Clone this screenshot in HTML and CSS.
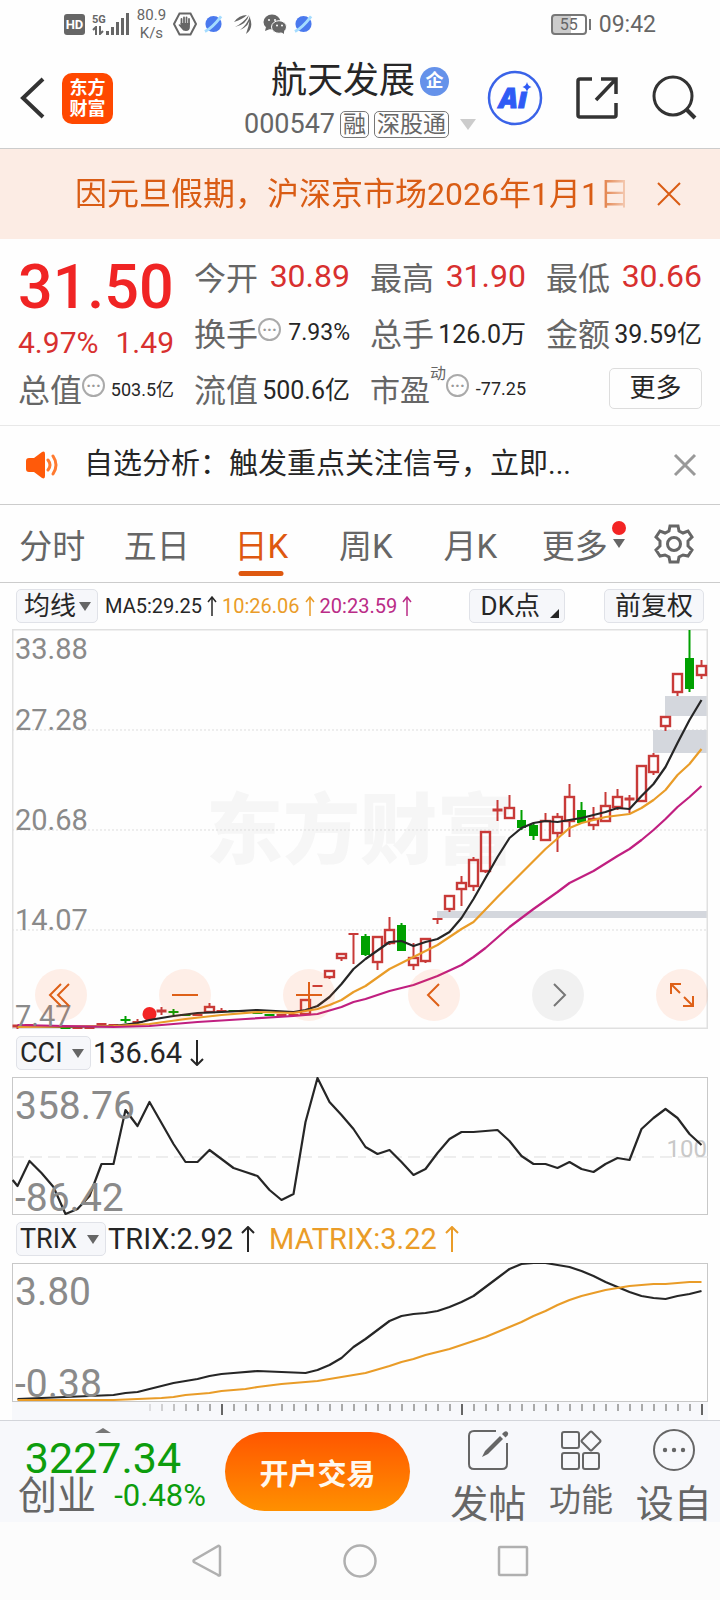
FILE: index.html
```html
<!DOCTYPE html>
<html lang="zh-CN">
<head>
  <meta charset="UTF-8" />
  <meta name="viewport" content="width=device-width, initial-scale=1.0"/>
  <title>航天发展 000547</title>
  <link rel="stylesheet" href="styles.css">
</head>
<body>

  <div class="status">
    <span class="hd">HD</span>
    <div class="signal">
      <div class="net">
        <span>5G</span>
        <svg width="12" height="9" viewBox="0 0 12 9" fill="none" stroke="#666" stroke-width="2"><path d="M4 9V1L1 4M8 0v8l3-3"/></svg>
      </div>
      <svg width="24" height="22" viewBox="0 0 24 22" fill="#666"><path d="M0 18h3v4H0zM5 14h3v8H5zM10 9h3v13h-3zM15 5h3v17h-3zM20 0h3v22h-3z"/></svg>
    </div>
    <div class="speed"><span>80.9</span><span>K/s</span></div>
    <svg width="24" height="24" viewBox="0 0 24 24"><path d="M6.500 1.500h11L23 12l-5.500 10.500h-11L1 12z" fill="none" stroke="#666" stroke-width="2"/><path d="M8.500 12V7M11 11V5.500M13.500 11V5.500M16 12V7" stroke="#666" stroke-width="1.800" stroke-linecap="round"/><path d="M7.600 11h9.300v4q0 4-4 4-3 0-4.400-2.500L5.500 13q.6-1.400 2.100 0z" fill="#666"/></svg>
    <svg width="19" height="20" viewBox="0 0 20 20"><circle cx="10" cy="10" r="8.500" fill="#4a79ee"/><path d="M1 18Q9 14 18 2" stroke="#a5dcff" stroke-width="3" fill="none"/></svg>
    <svg class="fan" width="18" height="20" viewBox="0 0 18 20" fill="#666"><path d="M0 8Q5 1 13 1Q9 5 0 8zM1 13Q9 9 15 1Q13 10 1 13zM6 16Q13 11 16 2Q17 11 6 16zM12 20Q15 12 16 4Q20 14 12 20z"/></svg>
    <svg width="24" height="20" viewBox="0 0 24 20"><ellipse cx="9" cy="8" rx="8.500" ry="7.500" fill="#666"/><path d="M3 13l-1 4 5-2z" fill="#666"/><ellipse cx="16" cy="13" rx="7.500" ry="6.300" fill="#666" stroke="#fff" stroke-width="1"/><path d="M18 18l3 2v-4z" fill="#666"/><g fill="#fff"><circle cx="6" cy="6" r="1"/><circle cx="12" cy="6" r="1"/><circle cx="14" cy="11.500" r="1"/><circle cx="19" cy="11.500" r="1"/></g></svg>
    <svg width="19" height="20" viewBox="0 0 20 20"><circle cx="10" cy="10" r="8.500" fill="#4a79ee"/><path d="M1 18Q9 14 18 2" stroke="#a5dcff" stroke-width="3" fill="none"/></svg>
    <div class="power">
      <span class="battery">55</span>
      <span class="clock">09:42</span>
    </div>
  </div>

  <header class="header">
    <div class="header-left">
      <button class="icon" aria-label="返回"><svg width="26" height="42" viewBox="0 0 26 42" fill="none" stroke="#333" stroke-width="4"><path d="M23 2L3 21l20 19"/></svg></button>
      <a class="logo" href="#"><span>东方</span><span>财富</span></a>
    </div>
    <div class="stock">
      <h1>航天发展<span class="badge">企</span></h1>
      <div class="code">
        <span>000547</span>
        <span class="tag">融</span>
        <span class="tag">深股通</span>
        <span class="tri tri-light"></span>
      </div>
    </div>
    <div class="header-right">
      <button class="icon" aria-label="Ai">
        <svg width="56" height="56" viewBox="0 0 56 56"><circle cx="28" cy="28" r="26" fill="none" stroke="#3a63e8" stroke-width="2.500"/><text class="ai" x="12" y="38">Aı</text><path d="M40 12q.8 4 4.500 5-3.700 1-4.500 5-.8-4-4.500-5 3.700-1 4.500-5z" fill="#2f5bf5"/></svg>
      </button>
      <button class="icon" aria-label="分享">
        <svg width="44" height="44" viewBox="0 0 44 44" fill="none" stroke="#333" stroke-width="3.500"><path d="M17 3H5q-2 0-2 2v34q0 2 2 2h34q2 0 2-2V27M26 3h15v15M41 3L21 24"/></svg>
      </button>
      <button class="icon" aria-label="搜索">
        <svg width="46" height="46" viewBox="0 0 46 46" fill="none" stroke="#333" stroke-width="3"><circle cx="22" cy="21" r="19"/><path d="M35 34l9 9" stroke-width="4"/></svg>
      </button>
    </div>
  </header>

  <div class="notice">
    <p>因元旦假期，沪深京市场2026年1月1日至1月3日休市</p>
    <button class="icon" aria-label="关闭公告"><svg width="24" height="24" viewBox="0 0 24 24" stroke="#d95c14" stroke-width="2"><path d="M1 1l22 22M23 1L1 23"/></svg></button>
  </div>

  <section class="quote">
    <div class="price">
      <strong>31.50</strong>
      <div class="change"><span>4.97%</span><span>1.49</span></div>
    </div>
    <div class="cell"><span class="label">今开</span><span class="up">30.89</span></div>
    <div class="cell"><span class="label">最高</span><span class="up">31.90</span></div>
    <div class="cell"><span class="label">最低</span><span class="up">30.66</span></div>
    <div class="cell"><span class="label">换手<i class="dots">···</i></span><span class="val fit">7.93%</span></div>
    <div class="cell"><span class="label">总手</span><span class="val">126.0万</span></div>
    <div class="cell"><span class="label">金额</span><span class="val">39.59亿</span></div>
    <div class="cell"><span class="label">总值<i class="dots">···</i></span><span class="val small">503.5亿</span></div>
    <div class="cell"><span class="label">流值</span><span class="val">500.6亿</span></div>
    <div class="cell"><span class="label tight">市盈<sup>动</sup><i class="dots">···</i></span><span class="val small">-77.25</span></div>
    <div class="cell end"><button class="more">更多</button></div>
  </section>

  <div class="alert">
    <svg width="34" height="28" viewBox="0 0 34 28"><path d="M1 10q0-3 3-3h5l8-6q3-1.500 3 2v22q0 3.500-3 2l-8-6H4q-3 0-3-3z" fill="#ff5a0a"/><path d="M23 9q4 5 0 10M28 5q6 9 0 18" fill="none" stroke="#ff7a30" stroke-width="3" stroke-linecap="round"/></svg>
    <p>自选分析：触发重点关注信号，立即...</p>
    <button class="icon" aria-label="关闭提醒"><svg width="24" height="24" viewBox="0 0 24 24" stroke="#999" stroke-width="3"><path d="M2 2l20 20M22 2L2 22"/></svg></button>
  </div>

  <nav class="tabs">
    <button>分时</button>
    <button>五日</button>
    <button class="active">日K</button>
    <button>周K</button>
    <button>月K</button>
    <button class="has-dot">更多</button>
    <button class="gear" aria-label="设置">
      <svg width="40" height="40" viewBox="0 0 40 40" fill="none" stroke="#666" stroke-width="3"><path d="M16 2h8l1 5 4 2 5-2 4 6-4 4v5l4 4-4 6-5-1-4 2-1 5h-8l-1-5-4-2-5 1-4-6 4-4v-5l-4-4 4-6 5 2 4-2z"/><circle cx="20" cy="20" r="6.500"/></svg>
    </button>
  </nav>

  <div class="toolbar">
    <span class="picker"><select aria-label="主图指标"><option>均线</option></select></span>
    <div class="ma">
      <span class="ink">MA5:29.25<svg class="arrow" viewBox="0 0 10 20"><path d="M5 20V1M1 6l4-5 4 5"/></svg></span>
      <span class="gold">10:26.06<svg class="arrow" viewBox="0 0 10 20"><path d="M5 20V1M1 6l4-5 4 5"/></svg></span>
      <span class="pink">20:23.59<svg class="arrow" viewBox="0 0 10 20"><path d="M5 20V1M1 6l4-5 4 5"/></svg></span>
    </div>
    <button class="chip corner">DK点</button>
    <button class="chip">前复权</button>
  </div>

  <div class="plot">
    <svg id="kline" viewBox="0 0 696 400"></svg>
    <div class="controls">
      <button aria-label="最早"><svg width="26" height="26" viewBox="0 0 26 26"><path d="M13 2L2 13l11 11M21 2L10 13l11 11"/></svg></button>
      <button aria-label="缩小"><svg width="26" height="26" viewBox="0 0 26 26"><path d="M0 13h26"/></svg></button>
      <button aria-label="放大"><svg width="26" height="26" viewBox="0 0 26 26"><path d="M0 13h26M13 0v26"/></svg></button>
      <button aria-label="左移"><svg width="26" height="26" viewBox="0 0 26 26"><path d="M18 2L7 13l11 11"/></svg></button>
      <button class="off" aria-label="右移"><svg width="26" height="26" viewBox="0 0 26 26"><path d="M9 2l11 11L9 24"/></svg></button>
      <button aria-label="全屏"><svg width="26" height="26" viewBox="0 0 26 26"><path d="M2 12V2h10M2 2l9 9M24 14v10H14M24 24l-9-9"/></svg></button>
    </div>
  </div>

  <div class="indicator">
    <span class="picker wide"><select aria-label="副图指标一"><option>CCI</option></select></span>
    <span class="ink">136.64<svg class="arrow" viewBox="0 0 14 26"><path d="M7 0v25M1 19l6 6 6-6"/></svg></span>
  </div>
  <div class="plot"><svg id="cci" viewBox="0 0 696 138"></svg></div>

  <div class="indicator">
    <span class="picker wide"><select aria-label="副图指标二"><option>TRIX</option></select></span>
    <span class="ink">TRIX:2.92<svg class="arrow" viewBox="0 0 14 26"><path d="M7 26V1M1 7l6-6 6 6"/></svg></span>
    <span class="gold">MATRIX:3.22<svg class="arrow" viewBox="0 0 14 26"><path d="M7 26V1M1 7l6-6 6 6"/></svg></span>
  </div>
  <div class="plot"><svg id="trix" viewBox="0 0 696 139"></svg></div>
  <div class="plot ruler"><svg id="ruler" viewBox="0 0 696 18"></svg></div>

  <footer class="bottom">
    <div class="index">
      <span class="tri-up"></span>
      <strong>3227.34</strong>
      <div><span class="name">创业</span><span>-0.48%</span></div>
    </div>
    <button class="trade">开户交易</button>
    <div class="actions">
      <a href="#">
        <svg width="42" height="42" viewBox="0 0 42 42" fill="none" stroke="#666" stroke-width="2"><path d="M29 2H7Q2 2 2 7v28q0 5 5 5h28q5 0 5-5V14"/><path d="M15 28l3-6L33 7l3 3-15 15z" fill="#666" stroke="none"/><path d="M35 5l2-2q2-1.500 3.500 0t0 3.500l-2 2z" fill="#666" stroke="none"/></svg>
        <span>发帖</span>
      </a>
      <a href="#">
        <svg width="42" height="42" viewBox="0 0 42 42" fill="none" stroke="#666" stroke-width="2"><rect x="2" y="3" width="17" height="16" rx="2"/><rect x="2" y="24" width="17" height="16" rx="2"/><rect x="23" y="24" width="16" height="16" rx="2"/><path d="M30 3q1-1 2 0l8 8q1 1 0 2l-8 8q-1 1-2 0l-8-8q-1-1 0-2z"/></svg>
        <span class="mid">功能</span>
      </a>
      <a href="#">
        <svg width="42" height="42" viewBox="0 0 42 42"><circle cx="21" cy="21" r="20" fill="none" stroke="#666" stroke-width="2"/><g fill="#666"><circle cx="12" cy="21" r="2.200"/><circle cx="21" cy="21" r="2.200"/><circle cx="30" cy="21" r="2.200"/></g></svg>
        <span>设自</span>
      </a>
    </div>
  </footer>

  <div class="system">
    <button class="icon" aria-label="后退"><svg width="34" height="34" viewBox="0 0 34 34"><path d="M30 3v28q-1 1-2 0L4 18q-1-1 0-2L28 2q1-1 2 1z"/></svg></button>
    <button class="icon" aria-label="主页"><svg width="34" height="34" viewBox="0 0 34 34"><circle cx="17" cy="17" r="15.500"/></svg></button>
    <button class="icon" aria-label="最近任务"><svg width="34" height="34" viewBox="0 0 34 34"><rect x="3" y="3" width="28" height="28" rx="1"/></svg></button>
  </div>

  <script src="script.js"></script>
</body>
</html>
```

FILE: styles.css
```css
* {
  box-sizing: border-box;
  margin: 0;
  padding: 0;
}

body {
  font-family: Roboto, "Noto Sans CJK SC", sans-serif;
  background: #fefefe;
  color: #262626;
}

button, select {
  font-family: inherit;
  color: inherit;
  background: none;
  border: none;
  cursor: pointer;
}

a {
  color: inherit;
  text-decoration: none;
}

svg { display: block; }

.icon {
  display: flex;
  flex-shrink: 0;
}

/* status bar */
.status {
  display: flex;
  align-items: center;
  gap: 7px;
  height: 48px;
  padding: 0 64px;
  color: #666;
}

.hd {
  width: 21px;
  height: 21px;
  border-radius: 3px;
  background: #666;
  color: #fff;
  font-size: 13px;
  font-weight: 700;
  line-height: 21px;
  text-align: center;
}

.signal {
  display: flex;
  align-items: flex-end;
}

.net {
  font-size: 11px;
  font-weight: 700;
  line-height: 13px;
}

.speed {
  display: flex;
  flex-direction: column;
  align-items: center;
  font-size: 15px;
  line-height: 18px;
}

.fan { margin: 0 4px; }

.power {
  display: flex;
  align-items: center;
  gap: 12px;
  margin-left: auto;
}

.battery {
  position: relative;
  width: 36px;
  height: 21px;
  border: 2px solid #777;
  border-radius: 4px;
  background: linear-gradient(to right, #ccc 55%, #fff 55%);
  font-size: 16px;
  line-height: 17px;
  text-align: center;
}

.battery::after {
  content: "";
  position: absolute;
  top: 3px;
  right: -6px;
  width: 2px;
  height: 11px;
  background: #777;
}

.clock { font-size: 23px; }

/* header */
.header {
  display: grid;
  grid-template-columns: 1fr auto 1fr;
  align-items: center;
  height: 101px;
  border-bottom: 1px solid #ccc;
}

.header-left {
  display: flex;
  align-items: center;
  gap: 16px;
  padding-left: 20px;
}

.logo {
  display: flex;
  flex-direction: column;
  justify-content: center;
  align-items: center;
  width: 51px;
  height: 51px;
  border-radius: 10px;
  background: #ff4800;
  color: #fff;
  font-size: 18px;
  font-weight: 700;
  line-height: 21px;
}

.stock {
  display: flex;
  flex-direction: column;
  align-items: center;
  padding-top: 4px;
}

.stock h1 {
  display: flex;
  align-items: center;
  gap: 5px;
  font-size: 36px;
  font-weight: 400;
  line-height: 48px;
}

.badge {
  width: 29px;
  height: 29px;
  border-radius: 50%;
  background: #6592ea;
  color: #fff;
  font-size: 18px;
  font-weight: 700;
  line-height: 28px;
  text-align: center;
}

.code {
  display: flex;
  align-items: center;
  gap: 5px;
  color: #666;
  font-size: 27px;
  line-height: 38px;
}

.tag {
  padding: 0 2px;
  border: 1px solid #777;
  border-radius: 5px;
  font-size: 23px;
  line-height: 25px;
}

.tri {
  border: 6px solid transparent;
  border-top: 10px solid #666;
  border-bottom: 0;
}

.tri-light {
  margin-left: 6px;
  border-width: 11px 8px 0;
  border-top-color: #ccc;
}

.header-right {
  display: flex;
  align-items: center;
  justify-content: flex-end;
  gap: 32px;
  padding-right: 23px;
}

.ai {
  font: italic 800 28px "Open Sans", sans-serif;
  fill: #2f5bf5;
  stroke: #2f5bf5;
}

/* holiday notice */
.notice {
  display: flex;
  align-items: center;
  height: 90px;
  padding: 0 39px 0 75px;
  background: #fcece4;
  color: #d95c14;
}

.notice p {
  flex: 1;
  margin-right: 32px;
  overflow: hidden;
  white-space: nowrap;
  font-size: 32px;
  line-height: 48px;
  -webkit-mask-image: linear-gradient(to right, #000 94%, transparent 102%);
  mask-image: linear-gradient(to right, #000 94%, transparent 102%);
}

/* quote */
.quote {
  display: grid;
  grid-template-columns: repeat(4, 1fr);
  grid-auto-rows: 56px;
  column-gap: 20px;
  padding: 9px 18px;
  border-bottom: 1px solid #e8e8e8;
}

.price {
  grid-row: span 2;
  padding-top: 3px;
  color: #f02424;
}

.price strong {
  display: block;
  font-size: 61px;
  font-weight: 500;
  line-height: 72px;
}

.change {
  display: flex;
  justify-content: space-between;
  color: #d8302f;
  font-size: 30px;
  line-height: 40px;
}

.cell {
  display: flex;
  align-items: center;
  justify-content: space-between;
  white-space: nowrap;
}

.label {
  display: flex;
  align-items: center;
  color: #666;
  font-size: 32px;
}

.tight { font-size: 30px; }

.label sup {
  align-self: flex-start;
  font-size: 16px;
  line-height: 16px;
}

.dots {
  width: 23px;
  height: 23px;
  margin-bottom: 5px;
  border: 2px solid #aaa;
  border-radius: 50%;
  color: #999;
  font: 700 16px/19px Roboto, sans-serif;
  text-align: center;
}

.up {
  color: #d8302f;
  font-size: 32px;
}

.val { font-size: 25px; }

.fit { font-size: 23px; }

.small { font-size: 18px; }

.end { justify-content: flex-end; }

.more {
  width: 93px;
  height: 41px;
  border: 1px solid #ddd;
  border-radius: 5px;
  font-size: 26px;
  line-height: 36px;
}

/* signal alert */
.alert {
  display: flex;
  align-items: center;
  gap: 25px;
  height: 79px;
  padding: 0 23px 0 25px;
  border-bottom: 1px solid #ccc;
}

.alert p {
  flex: 1;
  font-size: 29px;
  line-height: 44px;
  padding-bottom: 2px;
  white-space: nowrap;
}

/* period tabs */
.tabs {
  display: flex;
  height: 78px;
  border-bottom: 1px solid #ccc;
  color: #666;
}

.tabs button {
  position: relative;
  flex: 9;
  font-size: 33px;
}

.tabs .active { color: #de5810; }

.tabs .active::after {
  content: "";
  position: absolute;
  left: 50%;
  bottom: 6px;
  width: 45px;
  height: 5px;
  border-radius: 3px;
  background: #de5810;
  transform: translateX(-50%);
}

.tabs .has-dot::before {
  content: "";
  position: absolute;
  top: 16px;
  right: 1px;
  width: 14px;
  height: 14px;
  border-radius: 50%;
  background: #f32424;
}

.tabs .has-dot::after {
  content: "";
  position: absolute;
  top: 34px;
  right: 2px;
  border: 6px solid transparent;
  border-top: 9px solid #666;
  border-bottom: 0;
}

.tabs .gear {
  display: flex;
  flex: 8;
  align-items: center;
  justify-content: center;
}

/* chart toolbars */
.toolbar, .indicator {
  display: flex;
  align-items: center;
  padding: 0 16px;
  white-space: nowrap;
}

.toolbar { height: 46px; }

.indicator {
  gap: 2px;
  height: 48px;
  font-size: 29px;
}

.picker {
  position: relative;
  height: 34px;
  border: 1px solid #e0e2e8;
  border-radius: 5px;
  background: #f6f7fa;
}

.picker select {
  appearance: none;
  height: 32px;
  padding: 0 20px 0 7px;
  font-size: 26px;
}

.picker::after {
  content: "";
  position: absolute;
  top: 12px;
  right: 6px;
  border: 6px solid transparent;
  border-top: 9px solid #666;
  border-bottom: 0;
  pointer-events: none;
}

.wide select {
  padding: 0 27px 0 3px;
  font-size: 27px;
}

.ma {
  display: flex;
  flex: 1;
  gap: 5px;
  padding-left: 7px;
  font-size: 20px;
}

.ma span, .indicator > span {
  display: flex;
  align-items: center;
}

.arrow {
  width: 10px;
  height: 20px;
  margin-left: 5px;
  fill: none;
  stroke: currentColor;
  stroke-width: 1.5;
}

.indicator .arrow {
  width: 14px;
  height: 26px;
  margin: 0 12px 0 8px;
  stroke-width: 2;
}

.ink { color: #262626; }
.gold { color: #ea9c28; }
.pink { color: #ba2c87; }

.chip {
  position: relative;
  height: 34px;
  padding: 0 10px;
  border: 1px solid #e0e2e8;
  border-radius: 5px;
  background: #f6f7fa;
  font-size: 26px;
  line-height: 32px;
}

.corner {
  margin-right: 39px;
  padding: 0 24px 0 11px;
}

.corner::after {
  content: "";
  position: absolute;
  right: 5px;
  bottom: 4px;
  border-left: 9px solid transparent;
  border-bottom: 9px solid #262626;
}

/* charts */
.plot {
  position: relative;
  margin: 0 12px;
}

.plot > svg {
  width: 100%;
  height: auto;
}

.ruler { background: #f7f8fb; }

.axis {
  fill: #8a8a8a;
  font-size: 29px;
}

.axis-big { font-size: 39px; }

.guide {
  fill: #c8c8c8;
  font-size: 24px;
  text-anchor: end;
}

.watermark {
  fill: #f6f6f6;
  font-size: 77px;
  font-weight: 900;
}

.controls {
  position: absolute;
  left: 23px;
  right: 0;
  bottom: 8px;
  display: flex;
  justify-content: space-between;
}

.controls button {
  display: flex;
  align-items: center;
  justify-content: center;
  width: 52px;
  height: 52px;
  border-radius: 50%;
  background: rgba(255, 100, 30, 0.1);
}

.controls path {
  fill: none;
  stroke: #de6018;
  stroke-width: 2;
}

.controls .off { background: rgba(0, 0, 0, 0.05); }
.controls .off path { stroke: #777; }

/* bottom bar */
.bottom {
  display: flex;
  height: 102px;
  overflow: hidden;
  border-top: 1px solid #d3d5da;
  background: #f7f8fb;
}

.index {
  display: flex;
  flex-direction: column;
  align-items: center;
  width: 206px;
  margin-right: 19px;
  padding-top: 7px;
  color: #0d9d0d;
  font-size: 31px;
}

.index .tri-up {
  border: 8px solid transparent;
  border-bottom: 5px solid #777;
  border-top: 0;
}

.index strong {
  font-size: 43px;
  font-weight: 400;
  line-height: 50px;
}

.index div {
  display: flex;
  align-items: center;
  justify-content: space-between;
  width: 100%;
  padding-left: 18px;
  line-height: 26px;
}

.name {
  color: #666;
  font-size: 39px;
}

.trade {
  flex: 1;
  height: 79px;
  margin-top: 11px;
  border-radius: 40px;
  background: linear-gradient(#ff5600, #ff9000);
  color: #fff8ee;
  font-size: 29px;
  font-weight: 700;
}

.actions {
  display: flex;
  width: 278px;
  margin-left: 32px;
}

.actions a {
  display: flex;
  flex: 1;
  flex-direction: column;
  align-items: center;
  padding-top: 8px;
  color: #666;
  font-size: 38px;
  line-height: 66px;
}

.actions svg { flex-shrink: 0; }

.actions .mid {
  font-size: 32px;
  line-height: 58px;
}

/* system navigation */
.system {
  display: flex;
  align-items: center;
  justify-content: center;
  gap: 119px;
  height: 78px;
  background: #fcfcfc;
}

.system svg {
  fill: none;
  stroke: #b0b0b0;
  stroke-width: 2.5;
}
```

FILE: script.js
```js
const RED = "#c83a38";
const GREEN = "#00a000";
const STEP = 12;
const X0 = 5.5;

// index, color, high, top, bottom, low
const candles = [
  [0, "r", 396, 397, 398, 400], [1, "r", 396, 396, 396, 396], [2, "r", 397, 397, 397, 397],
  [3, "r", 397, 397, 397, 397], [4, "g", 399, 399, 399, 399], [5, "r", 399, 399, 399, 399],
  [6, "r", 398, 399, 399, 399], [7, "r", 395, 395, 395, 395], [8, "r", 396, 396, 396, 396],
  [9, "g", 387, 391, 391, 394], [10, "r", 390, 393, 393, 395], [12, "r", 378, 382, 383, 386],
  [13, "g", 380, 383, 383, 386], [14, "g", 386, 386, 386, 386], [15, "r", 385, 386, 386, 387],
  [16, "r", 374, 378, 383, 383], [17, "r", 379, 382, 382, 384], [18, "g", 382, 382, 382, 382],
  [20, "g", 384, 384, 384, 384], [21, "g", 385, 386, 386, 386], [22, "r", 386, 386, 386, 386],
  [23, "r", 385, 386, 386, 386], [24, "r", 371, 371, 385, 385], [25, "r", 357, 357, 357, 357],
  [26, "r", 341, 342, 348, 350], [27, "r", 324, 325, 329, 332], [28, "r", 305, 305, 305, 335],
  [29, "g", 305, 307, 326, 327], [30, "r", 307, 308, 333, 341], [31, "r", 288, 301, 314, 316],
  [32, "g", 294, 296, 322, 322], [33, "r", 314, 329, 336, 341], [34, "r", 309, 310, 332, 334],
  [35, "r", 290, 290, 290, 295], [36, "r", 266, 267, 280, 283], [37, "r", 247, 254, 260, 277],
  [38, "r", 228, 231, 257, 262], [39, "r", 202, 203, 242, 244], [40, "r", 171, 181, 182, 192],
  [41, "r", 166, 179, 189, 189], [42, "g", 181, 191, 199, 201], [43, "g", 194, 196, 207, 211],
  [44, "r", 184, 192, 211, 211], [45, "r", 184, 188, 204, 223], [46, "r", 155, 168, 192, 208],
  [47, "g", 173, 181, 194, 194], [48, "r", 178, 190, 196, 201], [49, "r", 163, 177, 192, 193],
  [50, "r", 160, 168, 178, 181], [51, "r", 166, 170, 171, 184], [52, "r", 136, 137, 172, 172],
  [53, "r", 124, 127, 143, 146], [54, "r", 87, 88, 97, 102], [55, "r", 44, 45, 63, 67],
  [56, "g", 1, 29, 60, 63], [57, "r", 31, 37, 46, 50]
];

// index, y
const ma5 = [[0, 397], [4, 398], [8, 397], [10, 394], [11, 391], [13, 387], [15, 384], [17, 383], [20, 381], [23, 383], [24, 381], [25, 377], [26, 368], [27, 355], [28, 340], [29, 330], [31, 313], [32, 312], [33, 317], [34, 313], [35, 310], [36, 303], [37, 289], [38, 270], [39, 249], [40, 228], [41, 209], [42, 199], [43, 194], [44, 192], [45, 193], [46, 191], [47, 189], [48, 186], [49, 183], [50, 179], [51, 180], [52, 167], [53, 155], [54, 138], [55, 114], [56, 91], [57, 71]];
const ma10 = [[0, 398], [8, 397], [11, 395], [14, 390], [17, 386], [20, 383], [23, 384], [25, 380], [26, 376], [27, 371], [28, 363], [29, 357], [31, 340], [33, 328], [35, 316], [37, 300], [38, 293], [40, 268], [42, 244], [44, 220], [46, 199], [47, 194], [49, 188], [51, 185], [52, 179], [53, 171], [54, 161], [55, 146], [56, 135], [57, 120]];
const ma20 = [[0, 396], [4, 397], [8, 398], [11, 397], [15, 393], [19, 390], [23, 387], [25, 385], [27, 378], [28, 373], [29, 370], [31, 362], [33, 356], [35, 347], [37, 336], [38, 328], [39, 319], [41, 298], [43, 280], [45, 263], [46, 254], [48, 242], [50, 227], [51, 220], [52, 211], [53, 201], [54, 190], [55, 178], [56, 168], [57, 157]];

const cci = [109, 84, 96, 110, 137, 132, 119, 87, 87, 33, 49, 25, 46, 67, 85, 85, 73, 82, 91, 95, 99, 113, 123, 117, 45, 1, 25, 38, 52, 70, 77, 73, 85, 98, 92, 76, 62, 55, 55, 54, 53, 64, 79, 87, 87, 91, 85, 92, 95, 87, 81, 83, 52, 41, 32, 41, 57, 68];

const trix = [[0, 136], [4, 134], [8, 132], [9, 130], [10, 129], [11, 126], [12, 123], [13, 120], [14, 118], [15, 116], [16, 113], [17, 111], [18, 110], [20, 108], [22, 109], [24, 110], [25, 107], [26, 102], [27, 95], [28, 84], [29, 76], [30, 67], [31, 58], [32, 53], [33, 51], [34, 50], [35, 48], [36, 44], [37, 39], [38, 33], [39, 24], [40, 15], [41, 6], [42, 1], [43, 0], [44, 0], [45, 2], [46, 4], [47, 8], [48, 13], [49, 19], [50, 24], [51, 29], [52, 33], [53, 35], [54, 36], [55, 33], [56, 31], [57, 28]];
const matrix = [[0, 137], [8, 137], [10, 136], [12, 135], [13, 134], [14, 132], [16, 130], [17, 128], [19, 126], [20, 124], [22, 121], [25, 118], [28, 112], [29, 110], [31, 103], [32, 99], [33, 96], [34, 92], [36, 86], [38, 78], [39, 74], [40, 69], [41, 64], [42, 59], [43, 53], [44, 48], [45, 42], [46, 37], [47, 33], [48, 30], [49, 27], [50, 25], [51, 23], [53, 21], [54, 21], [56, 19], [57, 19]];

function px(i) {
  return X0 + i * STEP;
}

function line(points, color) {
  const d = points.map(([i, y]) => `${px(i)},${y}`).join(" ");
  return `<polyline points="${d}" fill="none" stroke="${color}" stroke-width="2.2" stroke-linejoin="round"/>`;
}

function frame(h, color, width) {
  return `<rect x="0.5" y="0.5" width="695" height="${h - 1}" fill="none" stroke="${color}" stroke-width="${width}"/>`;
}

function label(text, y, cls) {
  return `<text class="axis ${cls || ""}" x="3" y="${y}">${text}</text>`;
}

function candle([i, type, high, top, bottom, low]) {
  const x = px(i);
  const color = type === "r" ? RED : GREEN;
  let out = "";
  if (high < top) out += `<path d="M${x} ${high}V${top}" stroke="${color}" stroke-width="2"/>`;
  if (low > bottom) out += `<path d="M${x} ${bottom}V${low}" stroke="${color}" stroke-width="2"/>`;
  if (bottom - top < 2) {
    out += `<path d="M${x - 5} ${top}h10" stroke="${color}" stroke-width="${bottom - top + 2}"/>`;
  } else if (type === "r") {
    out += `<rect x="${x - 4.5}" y="${top}" width="9" height="${bottom - top}" fill="none" stroke="${color}" stroke-width="2.4"/>`;
  } else {
    out += `<rect x="${x - 4.5}" y="${top}" width="9" height="${bottom - top}" fill="${color}"/>`;
  }
  return out;
}

// daily candles
let k = `<text class="watermark" x="194" y="229">东方财富</text>`;
[101, 201, 301].forEach((y) => {
  k += `<path d="M0 ${y}H696" stroke="#ddd" stroke-width="1" stroke-dasharray="2 2"/>`;
});
k += `<path d="M653 67H696V87H653zM641 101H696V124H641zM425 282H696V289H425z" fill="#d4d7dd"/>`;
k += frame(400, "#e0e0e0", 2);
k += candles.map(candle).join("");
k += `<circle cx="${px(11)}" cy="385" r="7" fill="#f32424"/>`;
k += line(ma5, "#262626") + line(ma10, "#e99c28") + line(ma20, "#c01f80");
k += label("33.88", 30) + label("27.28", 101) + label("20.68", 201) + label("14.07", 301) + label("7.47", 397);
document.getElementById("kline").innerHTML = k;

// CCI
document.getElementById("cci").innerHTML =
  frame(138, "#c8c8c8", 1) +
  `<path d="M0 80H696" stroke="#ddd" stroke-width="1" stroke-dasharray="12 6"/>` +
  `<text class="guide" x="695" y="80">100</text>` +
  line([[-0.4, 103]].concat(cci.map((y, i) => [i, y])), "#262626") +
  label("358.76", 42, "axis-big") + label("-86.42", 134, "axis-big");

// TRIX
document.getElementById("trix").innerHTML =
  frame(139, "#c8c8c8", 1) + line(trix, "#262626") + line(matrix, "#e99c28") +
  label("3.80", 42, "axis-big") + label("-0.38", 134, "axis-big");

// date ruler, longer mark every 20 days
let ticks = "";
for (let i = 11; i <= 57; i++) {
  const major = (i - 17) % 20 === 0;
  const opacity = Math.min(1, (i - 9) / 6);
  ticks += `<path d="M${px(i) + 0.5} 2v${major ? 11 : 7}" stroke="${major ? "#666" : "#aaa"}" stroke-width="2" opacity="${opacity}"/>`;
}
document.getElementById("ruler").innerHTML = ticks;
```
